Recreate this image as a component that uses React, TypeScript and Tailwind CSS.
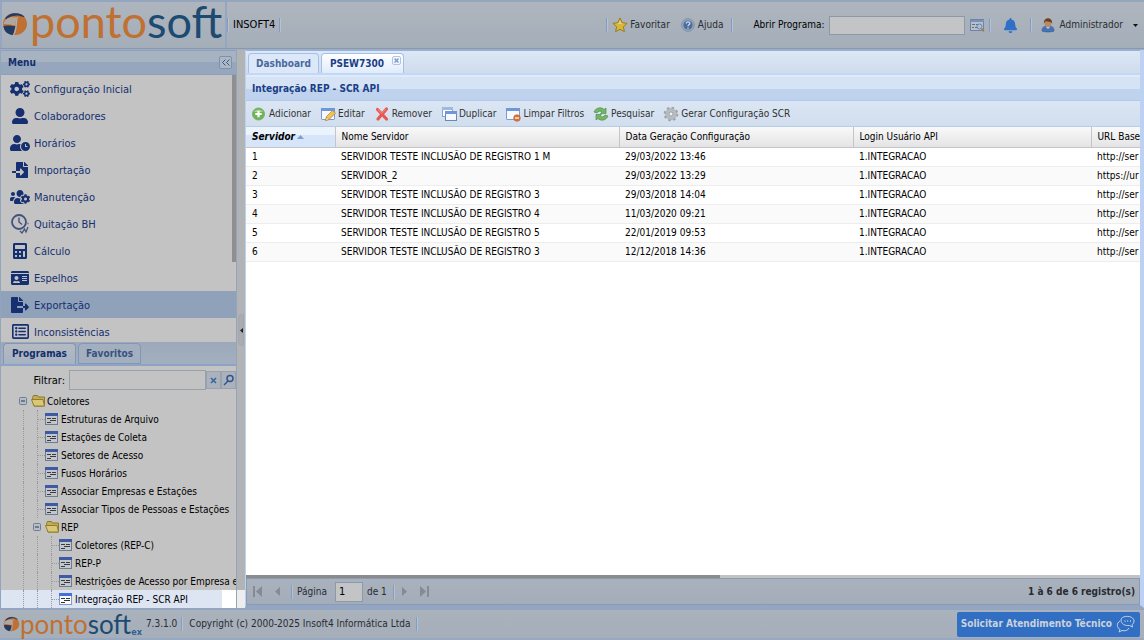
import type { ReactNode } from "react";
import {
  FaCalculator,
  FaCogs,
  FaFileExport,
  FaFileImport,
  FaIdCard,
  FaBell,
  FaRegListAlt,
  FaUserAlt,
  FaUserClock,
  FaUsersCog,
} from "react-icons/fa";

function HistoryIcon() {
  return (
    <svg className="h-5 w-5" viewBox="0 0 20 20" fill="none" stroke="#43527c" strokeWidth="1.8">
      <circle cx="9" cy="8" r="7" />
      <path d="M9 3.500V8l3 2.500" strokeWidth="1.400" />
      <path d="M10 17l2 2 2.500-4 1.500 3 2-5M17.500 9.500h1" strokeWidth="1.300" />
    </svg>
  );
}

function StarIcon() {
  return (
    <svg className="h-4 w-4" viewBox="0 0 16 16">
      <path
        d="M8 1l2.100 4.700 5 .6-3.700 3.400 1 5L8 12.200l-4.400 2.500 1-5L.9 6.300l5-.6z"
        fill="#d8b83a"
        stroke="#9b7d17"
      />
      <path d="M8 3l1.400 3.500 3 .5H4l2.600-.6z" fill="#e6d384" />
    </svg>
  );
}

function HelpIcon() {
  return (
    <svg className="h-4 w-4" viewBox="0 0 16 16">
      <circle cx="8" cy="8" r="6.300" fill="#9aa9bd" stroke="#7f8fa8" />
      <circle cx="8" cy="8" r="4.600" fill="#4a6c9f" />
      <path d="M6.300 6.500c0-2.300 3.600-2.200 3.500 0C9.800 7.800 8 7.700 8 9.200M8 10.500v1.300" stroke="#d5dbe4" strokeWidth="1.300" fill="none" />
    </svg>
  );
}

function SearchFormIcon() {
  return (
    <svg className="h-4 w-4" viewBox="0 0 16 16">
      <rect x="1.500" y="2.500" width="13" height="11" fill="#b9c0c9" stroke="#6d84a8" />
      <path d="M1 3h14v2H1z" fill="#7691bb" />
      <path d="M3 7.500h3M7 7.500h2M3 10.500h2M6 10.500h3" stroke="#5d6f8c" />
      <circle cx="10.500" cy="9.500" r="2.500" fill="#aebfd4" stroke="#6b87ae" />
      <path d="M12.500 11.500l2.500 3" stroke="#a97c46" strokeWidth="1.600" />
    </svg>
  );
}

function UserIcon() {
  return (
    <svg className="h-4 w-4" viewBox="0 0 16 16">
      <path d="M2 14c0-4 2-5 6-5s6 1 6 5c-2 1.300-10 1.300-12 0z" fill="#4573b5" stroke="#345a94" strokeWidth=".6" />
      <path d="M5.500 9.500L8 12l2.500-2.500z" fill="#c5c9cf" />
      <circle cx="8" cy="6" r="3.700" fill="#bc8a62" />
      <path d="M3.800 6.500C3.500-.5 12.500-.5 12.200 6.500 11 4 7 5 5.500 4.200z" fill="#6a3f20" />
    </svg>
  );
}

function AddIcon() {
  return (
    <svg className="h-4 w-4" viewBox="0 0 16 16">
      <circle cx="7.500" cy="8" r="6" fill="#6eb455" stroke="#7fae70" />
      <path d="M3 6c1-3 8-3 9 0z" fill="#a3d490" />
      <path d="M7.500 4.800v6.400M4.300 8h6.400" stroke="#fff" strokeWidth="2.200" />
    </svg>
  );
}

function WindowBase({ children }: { children?: ReactNode }) {
  return (
    <svg className="h-4 w-4" viewBox="0 0 16 16">
      <rect x="1.500" y="2.500" width="13" height="11" rx=".6" fill="#f6faff" stroke="#7a9bd0" />
      <path d="M1 2h14v3H1z" fill="#6f97d9" />
      {children}
    </svg>
  );
}

function EditIcon() {
  return (
    <WindowBase>
      <path d="M5.500 14.500l1-4L12.500 4.500l3 2.700L9 13.500z" fill="#f0c456" stroke="#b98a2e" strokeWidth=".8" />
      <path d="M5.500 14.500l1-3.500 2.500 2.500z" fill="#fbe6c2" stroke="#9b7a45" strokeWidth=".5" />
    </WindowBase>
  );
}

function RemoveIcon() {
  return (
    <svg className="h-4 w-4" viewBox="0 0 16 16">
      <path d="M3.500 3.500l9 9.500M12.500 3L4 13" stroke="#e9584f" strokeWidth="3.200" strokeLinecap="round" />
      <path d="M3.500 3.300l4.300 4.200L12 3" stroke="#f58a80" strokeWidth="1" fill="none" />
    </svg>
  );
}

function DuplicateIcon() {
  return (
    <svg className="h-4 w-4" viewBox="0 0 16 16">
      <rect x="1.500" y="1.500" width="10" height="9" fill="#fff" stroke="#85a4d3" />
      <path d="M1 1h11v3H1z" fill="#9db9e6" />
      <rect x="4.500" y="5.500" width="11" height="9" fill="#f5f9ff" stroke="#6788bd" />
      <path d="M4 5h12v3H4z" fill="#6f97d9" />
    </svg>
  );
}

function ClearIcon() {
  return (
    <WindowBase>
      <circle cx="12" cy="12" r="3.300" fill="#e2703a" stroke="#c45b28" strokeWidth=".6" />
      <path d="M10 12h4" stroke="#fff" strokeWidth="1.300" />
    </WindowBase>
  );
}

function RefreshIcon() {
  return (
    <svg className="h-4 w-4" viewBox="0 0 16 16" fill="#74b566" stroke="#4d9246" strokeWidth=".7">
      <path d="M1 6c2-5 8-5 10-2.500L13 2v5.500H7.500L9 6C7 4.500 5 5 4 7z" />
      <path d="M15 10c-2 5-8 5-10 2.500L3 14V8.500h5.500L7 10c2 1.500 4 1 5-1z" />
    </svg>
  );
}

function GearIcon() {
  return (
    <svg className="h-4 w-4" viewBox="0 0 16 16" fill="none">
      <circle cx="8" cy="8" r="6" stroke="#9ea2a7" strokeWidth="2.600" strokeDasharray="2.350 2.350" />
      <circle cx="8" cy="8" r="4" stroke="#b9bcc0" strokeWidth="3" />
      <circle cx="8" cy="8" r="2.100" fill="#eef1f5" stroke="#94989d" />
      <circle cx="8" cy="8" r="5.500" stroke="#a6aaae" strokeWidth=".7" />
    </svg>
  );
}

function ProgramIcon({ active }: { active?: boolean }) {
  return (
    <svg className="h-4 w-4 shrink-0" viewBox="0 0 16 16">
      <rect x=".5" y="2.500" width="12" height="11" fill={active ? "#f8fbff" : "#c3c7cd"} stroke={active ? "#8099c8" : "#6d7c96"} />
      <path d="M0 2h13v3H0z" fill={active ? "#4472d8" : "#3c5ba4"} />
      <path d="M2 7.500h4M5 9.500h6M2 11.500h4M7 7.500h4" stroke={active ? "#333" : "#3b3b3b"} />
    </svg>
  );
}

function FolderIcon() {
  return (
    <svg className="h-4 w-4 shrink-0" viewBox="0 0 16 16">
      <path d="M1.500 4.500l1-2h4l1 1.500h6v9H3z" fill="#c2ac57" stroke="#8d7829" />
      <path d="M.5 6.500h11.500l1.500 6.500H3z" fill="#d9c878" stroke="#927d2e" />
    </svg>
  );
}

function ExpandIcon() {
  return (
    <svg className="h-4 w-4 shrink-0" viewBox="0 0 16 16">
      <rect x="4.500" y="4.500" width="7" height="7" rx="1" fill="#b8bdc4" stroke="#6b7f9d" />
      <path d="M6 8h4" stroke="#26395a" />
    </svg>
  );
}

function ChatIcon() {
  return (
    <svg className="h-5 w-5" viewBox="0 0 20 20" fill="none" stroke="#c3d0e2">
      <path d="M5 6c0-5 13-5 13 1 0 2-1 3-2 3.700l.5 2.300-3-1.500C9 12 5 10 5 6z" />
      <path d="M4 7c-4 2-3 7 0 8.500L3 18l3-1.500c3 .8 6 0 7-2.500" />
      <path d="M8.500 7h1M11.200 7h1M14 7h1" strokeWidth="1.300" />
    </svg>
  );
}

function Sep() {
  return <span className="h-3.5 w-0.5 border-l border-[#7f9dc8] bg-[#b8c2cf]" />;
}

function LogoMark({ className }: { className: string }) {
  return (
    <svg className={className} viewBox="0 0 26 24">
      <ellipse cx="13" cy="12" rx="12" ry="11" fill="#c07030" />
      <path d="M3 7C7-.5 19 0 23 5.500c-5-1.500-6-3-12-1.500-4 .8-5 3-8 3z" fill="#233a63" />
      <path d="M1.500 14c4-1 7-.5 12 .3L11 23C5 22.500 2 19 1.500 14z" fill="#233a63" />
      <path d="M1.500 12C3 6 8 4.500 15 5.500c-1.500 2-1 5-1.500 8C10 13 6 12 1.500 12z" fill="#b0a79f" />
      <path d="M15.500 5c-2 5 0 12-4 18" stroke="#aab2bc" strokeWidth="1.200" fill="none" />
    </svg>
  );
}

const menuItems = [
  { label: "Configuração Inicial", icon: <FaCogs size={20} /> },
  { label: "Colaboradores", icon: <FaUserAlt size={16} /> },
  { label: "Horários", icon: <FaUserClock size={20} /> },
  { label: "Importação", icon: <FaFileImport size={16} /> },
  { label: "Manutenção", icon: <FaUsersCog size={20} /> },
  { label: "Quitação BH", icon: <HistoryIcon /> },
  { label: "Cálculo", icon: <FaCalculator size={16} /> },
  { label: "Espelhos", icon: <FaIdCard size={18} /> },
  { label: "Exportação", icon: <FaFileExport size={18} />, selected: true },
  { label: "Inconsistências", icon: <FaRegListAlt size={17} /> },
];

const treeNodes = [
  { label: "Coletores", depth: 0, folder: true },
  { label: "Estruturas de Arquivo", depth: 1 },
  { label: "Estações de Coleta", depth: 1 },
  { label: "Setores de Acesso", depth: 1 },
  { label: "Fusos Horários", depth: 1 },
  { label: "Associar Empresas e Estações", depth: 1 },
  { label: "Associar Tipos de Pessoas e Estações", depth: 1 },
  { label: "REP", depth: 1, folder: true },
  { label: "Coletores (REP-C)", depth: 2 },
  { label: "REP-P", depth: 2 },
  { label: "Restrições de Acesso por Empresa e", depth: 2 },
  { label: "Integração REP - SCR API", depth: 2, active: true },
];

const actions = [
  { label: "Adicionar", icon: <AddIcon /> },
  { label: "Editar", icon: <EditIcon /> },
  { label: "Remover", icon: <RemoveIcon /> },
  { label: "Duplicar", icon: <DuplicateIcon /> },
  { label: "Limpar Filtros", icon: <ClearIcon /> },
  { label: "Pesquisar", icon: <RefreshIcon /> },
  { label: "Gerar Configuração SCR", icon: <GearIcon /> },
];

const rows = [
  ["1", "SERVIDOR TESTE INCLUSÃO DE REGISTRO 1 M", "29/03/2022 13:46", "1.INTEGRACAO", "http://ser"],
  ["2", "SERVIDOR_2", "29/03/2022 13:29", "1.INTEGRACAO", "https://ur"],
  ["3", "SERVIDOR TESTE INCLUSÃO DE REGISTRO 3", "29/03/2018 14:04", "1.INTEGRACAO", "http://ser"],
  ["4", "SERVIDOR TESTE INCLUSÃO DE REGISTRO 4", "11/03/2020 09:21", "1.INTEGRACAO", "http://ser"],
  ["5", "SERVIDOR TESTE INCLUSÃO DE REGISTRO 5", "22/01/2019 09:53", "1.INTEGRACAO", "http://ser"],
  ["6", "SERVIDOR TESTE INCLUSÃO DE REGISTRO 3", "12/12/2018 14:36", "1.INTEGRACAO", "http://ser"],
];

function Header() {
  return (
    <header className="flex h-[49px] shrink-0 items-center border-t-2 border-b border-t-[#94a5be] border-b-[#8598b5] bg-linear-to-b from-[#aeb5be] to-[#a4aeb9] pr-1.5">
      <div className="flex h-full w-[227px] shrink-0 items-start border-x-2 border-[#95a6be]">
        <LogoMark className="mt-2.5 mr-0.5 h-6 w-[26px] shrink-0" />
        <span className="font-['Lato'] text-[45px] leading-[38px] text-[#c07030]">
          ponto<span className="text-[#1d4a70]">soft</span>
        </span>
      </div>
      <div className="flex items-center gap-1">
        <Sep />
        <span className="text-[11px] text-black">INSOFT4</span>
        <Sep />
      </div>
      <div className="ml-auto flex items-center text-[#2a2d31]">
        <Sep />
        <button className="ml-1 flex items-center gap-0.5">
          <StarIcon />
          Favoritar
        </button>
        <button className="ml-2.5 flex items-center gap-0.5">
          <HelpIcon />
          Ajuda
        </button>
        <span className="ml-2 flex">
          <Sep />
        </span>
        <label htmlFor="program" className="ml-5 text-black">
          Abrir Programa:
        </label>
        <input id="program" className="mr-1 ml-1 h-[19px] w-[136px] border border-[#8d98a8] bg-[#c3c4c5] px-1" />
        <button aria-label="Buscar programa">
          <SearchFormIcon />
        </button>
        <span className="ml-1 flex">
          <Sep />
        </span>
        <button aria-label="Notificações" className="mx-3 text-[#2f6fc6]">
          <FaBell size={15} />
        </button>
        <Sep />
        <button className="ml-2 flex items-center gap-1">
          <UserIcon />
          Administrador
          <svg className="ml-1.5 h-[3px] w-[5px]" viewBox="0 0 5 3">
            <path d="M0 0h5L2.500 3z" fill="#111" />
          </svg>
        </button>
      </div>
    </header>
  );
}

function Sidebar() {
  return (
    <aside className="flex w-[237px] shrink-0 flex-col overflow-hidden border-x border-[#93a4bd] bg-[#c3c3c3]">
      <div className="flex h-[25px] shrink-0 items-center justify-between border-y border-[#8c9fbe] bg-linear-to-b from-[#a8b3c1] from-50% to-[#95a6bd] to-50% pr-1 pl-[7px] font-bold text-[#142f6d]">
        Menu
        <button aria-label="Recolher menu" className="flex h-[13px] w-[13px] items-center justify-center rounded-xs border border-[#7e90ac] bg-[#adb8c6]">
          <svg className="h-[7px] w-2" viewBox="0 0 8 7" fill="none" stroke="#40587f">
            <path d="M3.500.5l-3 3 3 3M7.500.5l-3 3 3 3" />
          </svg>
        </button>
      </div>
      <nav className="relative h-[267px] shrink-0 overflow-hidden text-[11px] text-[#152f70]">
        {menuItems.map((item) => (
          <a
            key={item.label}
            href="#"
            className={`flex h-[27px] items-center gap-1 pl-[9px] ${item.selected ? "bg-[#8fa2ba]" : ""}`}
          >
            <span className="flex w-5 justify-center">{item.icon}</span>
            <span className="pt-0.5">{item.label}</span>
          </a>
        ))}
        <div className="absolute top-0 right-0 h-[187px] w-1 bg-[#8f8f8f]" />
      </nav>
      <div className="flex h-6 shrink-0 items-end gap-0.5 border-b-2 border-[#8da3c6] bg-linear-to-b from-[#9ba9bb] to-[#a3afbe] pl-0.5 font-bold">
        <button className="h-[21px] rounded-t-sm border border-b-0 border-[#8196b8] bg-linear-to-b from-[#b5bac0] to-[#a6b3c4] px-2 text-[#132f6a]">
          Programas
        </button>
        <button className="h-[21px] rounded-t-sm border border-[#8196b8] bg-[#a3afbf] px-[7px] text-[#38527f]">Favoritos</button>
      </div>
      <div className="flex h-[26px] shrink-0 items-center justify-end pt-0.5">
        <label htmlFor="filter" className="pt-0.5 pr-1 text-[11px] text-black">
          Filtrar:
        </label>
        <input id="filter" className="h-5 w-[137px] border border-[#98a0ac] bg-[#c3c3c3] px-1" />
        <button aria-label="Limpar" className="flex h-[18px] w-[15px] items-center justify-center border border-[#98a3b2] bg-[#acb2bb]">
          <svg className="h-[7px] w-[7px]" viewBox="0 0 7 7" stroke="#37639f" strokeWidth="1.600">
            <path d="M1 1l5 5M6 1L1 6" />
          </svg>
        </button>
        <button aria-label="Filtrar" className="flex h-[18px] w-[15px] items-center justify-center border border-[#98a3b2] bg-[#acb2bb]">
          <svg className="h-3 w-3" viewBox="0 0 12 12" fill="none" stroke="#2f5590" strokeWidth="1.500">
            <circle cx="7" cy="4.500" r="3" />
            <path d="M5 7l-4 4" />
          </svg>
        </button>
      </div>
      <ul className="min-h-0 flex-1 overflow-hidden text-black">
        {treeNodes.map((node) => (
          <li
            key={node.label}
            className={`flex h-[18px] items-center pl-3.5 whitespace-nowrap ${
              node.active ? "bg-linear-to-r from-[#dde4f2] from-[94%] to-white to-[94%]" : ""
            }`}
          >
            {node.depth > 0 && <span className="ml-2 h-full w-1.5 shrink-0 border-l border-dotted border-[#999]" />}
            {node.depth > 1 && <span className="ml-2 h-full w-1.5 shrink-0 border-l border-dotted border-[#999]" />}
            {node.folder ? (
              <>
                <ExpandIcon />
                <FolderIcon />
              </>
            ) : (
              <>
                <span className="ml-2 flex h-full w-2 shrink-0 items-center border-l border-dotted border-[#999]">
                  <span className="w-full border-t border-dotted border-[#999]" />
                </span>
                <ProgramIcon active={node.active} />
              </>
            )}
            <span className="pt-0.5">{node.label}</span>
          </li>
        ))}
      </ul>
    </aside>
  );
}

function Splitter() {
  return (
    <div className="flex w-2 shrink-0 flex-col items-center bg-linear-to-t from-[#ededee] from-[18px] to-[#b2b3b5] to-[18px]">
      <button aria-label="Recolher" className="mt-[264px] flex h-8 w-1.5 items-center justify-center rounded-l-sm border border-[#a5a7aa] bg-[#aaacb0]">
        <svg className="h-[5px] w-[3px] shrink-0" viewBox="0 0 3 5">
          <path d="M3 0v5L0 2.500z" fill="#222" />
        </svg>
      </button>
    </div>
  );
}

function Grid() {
  const heads = ["Nome Servidor", "Data Geração Configuração", "Login Usuário API", "URL Base"];
  return (
    <div className="min-h-0 flex-1 overflow-hidden bg-white">
      <table className="w-full table-fixed border-collapse text-black">
        <colgroup>
          <col className="w-[89px]" />
          <col className="w-[284px]" />
          <col className="w-[234px]" />
          <col className="w-[238px]" />
          <col />
        </colgroup>
        <thead>
          <tr className="h-5 bg-linear-to-b from-[#f9f9f9] to-[#e4e4e6] text-left">
            <th className="border-r border-b border-[#c5c5c5] bg-linear-to-b from-[#ebf3fd] from-40% to-[#d6e5f9] to-40% pl-1.5 font-bold italic">
              <span className="flex items-center gap-0.5">
                Servidor
                <svg className="h-1 w-[7px]" viewBox="0 0 7 4">
                  <path d="M0 4h7L3.500 0z" fill="#7f9ed0" />
                </svg>
              </span>
            </th>
            {heads.map((head) => (
              <th key={head} className="overflow-hidden border-r border-b border-[#c5c5c5] pl-1.5 font-normal whitespace-nowrap last:border-r-0">
                {head}
              </th>
            ))}
          </tr>
        </thead>
        <tbody>
          {rows.map((row) => (
            <tr key={row[0]} className="h-[19px] border-b border-[#ededed] even:bg-[#fafafa]">
              {row.map((cell, i) => (
                <td key={i} className="overflow-hidden pl-1.5 whitespace-nowrap">
                  {cell}
                </td>
              ))}
            </tr>
          ))}
        </tbody>
      </table>
    </div>
  );
}

function PageButton({ label, path }: { label: string; path: string }) {
  return (
    <button aria-label={label} className="flex w-5 justify-center">
      <svg className="h-[11px] w-[11px]" viewBox="0 0 11 11" fill="#858b93">
        <path d={path} />
      </svg>
    </button>
  );
}

function Pager() {
  return (
    <div className="flex h-[27px] shrink-0 items-center border border-[#879bbb] bg-linear-to-b from-[#a9b1bc] to-[#a3adb9] text-[#282b30]">
      <PageButton label="Primeira" path="M1 0h2v11H1zM10 0v11L4 5.500z" />
      <PageButton label="Anterior" path="M8 1v9L3 5.500z" />
      <span className="ml-1 flex">
        <Sep />
      </span>
      <label htmlFor="page" className="mr-2 ml-1">
        Página
      </label>
      <input id="page" defaultValue="1" className="h-5 w-7 border border-[#8d98a8] bg-[#c3c4c5] px-[3px] text-[11px] text-black" />
      <span className="mr-1.5 ml-1">de 1</span>
      <Sep />
      <PageButton label="Próxima" path="M3 1v9l5-4.500z" />
      <PageButton label="Última" path="M1 0v11l6-5.500zM8 0h2v11H8z" />
      <span className="mr-1 ml-auto font-bold">1 à 6 de 6 registro(s)</span>
    </div>
  );
}

function MainPanel() {
  return (
    <main className="flex min-w-0 flex-1 flex-col border-r-4 border-b-[3px] border-l border-[#bdd2f2] border-b-[#93a5c1]">
      <div className="flex h-[25px] shrink-0 items-end gap-0.5 border-b-2 border-[#c3d8f6] border-t border-t-[#94b2e0] bg-linear-to-b from-[#dde7f5] to-[#cfdced] pl-0.5 font-bold">
        <button className="h-5 rounded-t-sm border border-b-0 border-[#a5c0e8] bg-[#dce8f8] px-[7px] text-[#4a6a9e]">Dashboard</button>
        <div className="flex h-5 rounded-t-sm border border-b-0 border-[#a5c0e8] bg-linear-to-b from-white to-[#dfebfb] pr-0.5 pl-2 text-[#1a3f86]">
          <button>PSEW7300</button>
          <button aria-label="Fechar" className="mt-0.5 ml-2 flex h-[9px] w-[9px] items-center justify-center rounded-xs border border-[#b2c5e0]">
            <svg className="h-[5px] w-[5px]" viewBox="0 0 5 5" stroke="#7d9cc9" strokeWidth="1.500">
              <path d="M.5.5l4 4M4.500.5l-4 4" />
            </svg>
          </button>
        </div>
      </div>
      <h1 className="flex h-[26px] shrink-0 items-center border-t-2 border-b border-t-[#dfebfb] border-b-[#b1c8eb] bg-linear-to-b from-[#d6e3f5] from-50% to-[#bfd2ee] to-50% pl-[6px] font-bold text-[#1a3f86]">
        Integração REP - SCR API
      </h1>
      <div className="flex h-[26px] shrink-0 items-center gap-[9px] border-b border-[#bacde8] bg-linear-to-b from-[#dbe6f4] to-[#d1deee] pl-[5px] text-[#333]">
        {actions.map((action) => (
          <button key={action.label} className="flex items-center gap-0.5 whitespace-nowrap">
            {action.icon}
            {action.label}
          </button>
        ))}
      </div>
      <Grid />
      <div className="h-[3px] shrink-0 bg-[#c3c3c3]">
        <div className="h-full w-[53%] bg-[#8b8b8b]" />
      </div>
      <Pager />
    </main>
  );
}

function Footer() {
  return (
    <footer className="flex h-8 shrink-0 items-center border-y-2 border-t-[#93a5c1] border-b-[#97a8c1] bg-linear-to-b from-[#aab2bc] to-[#a5aeb9] pr-1 pl-[3px] text-[#282b30]">
      <LogoMark className="h-4 w-[17px]" />
      <span className="font-['Lato'] text-[26px] leading-7 text-[#c07030]">
        ponto<span className="text-[#1d4a70]">soft</span>
      </span>
      <span className="mr-1 self-end text-[9px] leading-3 font-bold text-[#2c6392]">ex</span>
      <span className="mr-1">7.3.1.0</span>
      <Sep />
      <span className="mx-1.5">Copyright (c) 2000-2025 Insoft4 Informática Ltda</span>
      <Sep />
      <button className="ml-auto flex h-[25px] items-center gap-1 rounded-xs bg-[#316fc4] px-1 font-bold text-[#cbd2dc]">
        Solicitar Atendimento Técnico
        <ChatIcon />
      </button>
    </footer>
  );
}

export default function App() {
  return (
    <div className="flex h-screen flex-col overflow-hidden bg-[#a3adba] font-['DejaVu_Sans_Condensed','DejaVu_Sans',sans-serif] text-[10px] leading-4">
      <Header />
      <div className="flex min-h-0 flex-1 pt-px">
        <Sidebar />
        <Splitter />
        <MainPanel />
      </div>
      <Footer />
    </div>
  );
}
